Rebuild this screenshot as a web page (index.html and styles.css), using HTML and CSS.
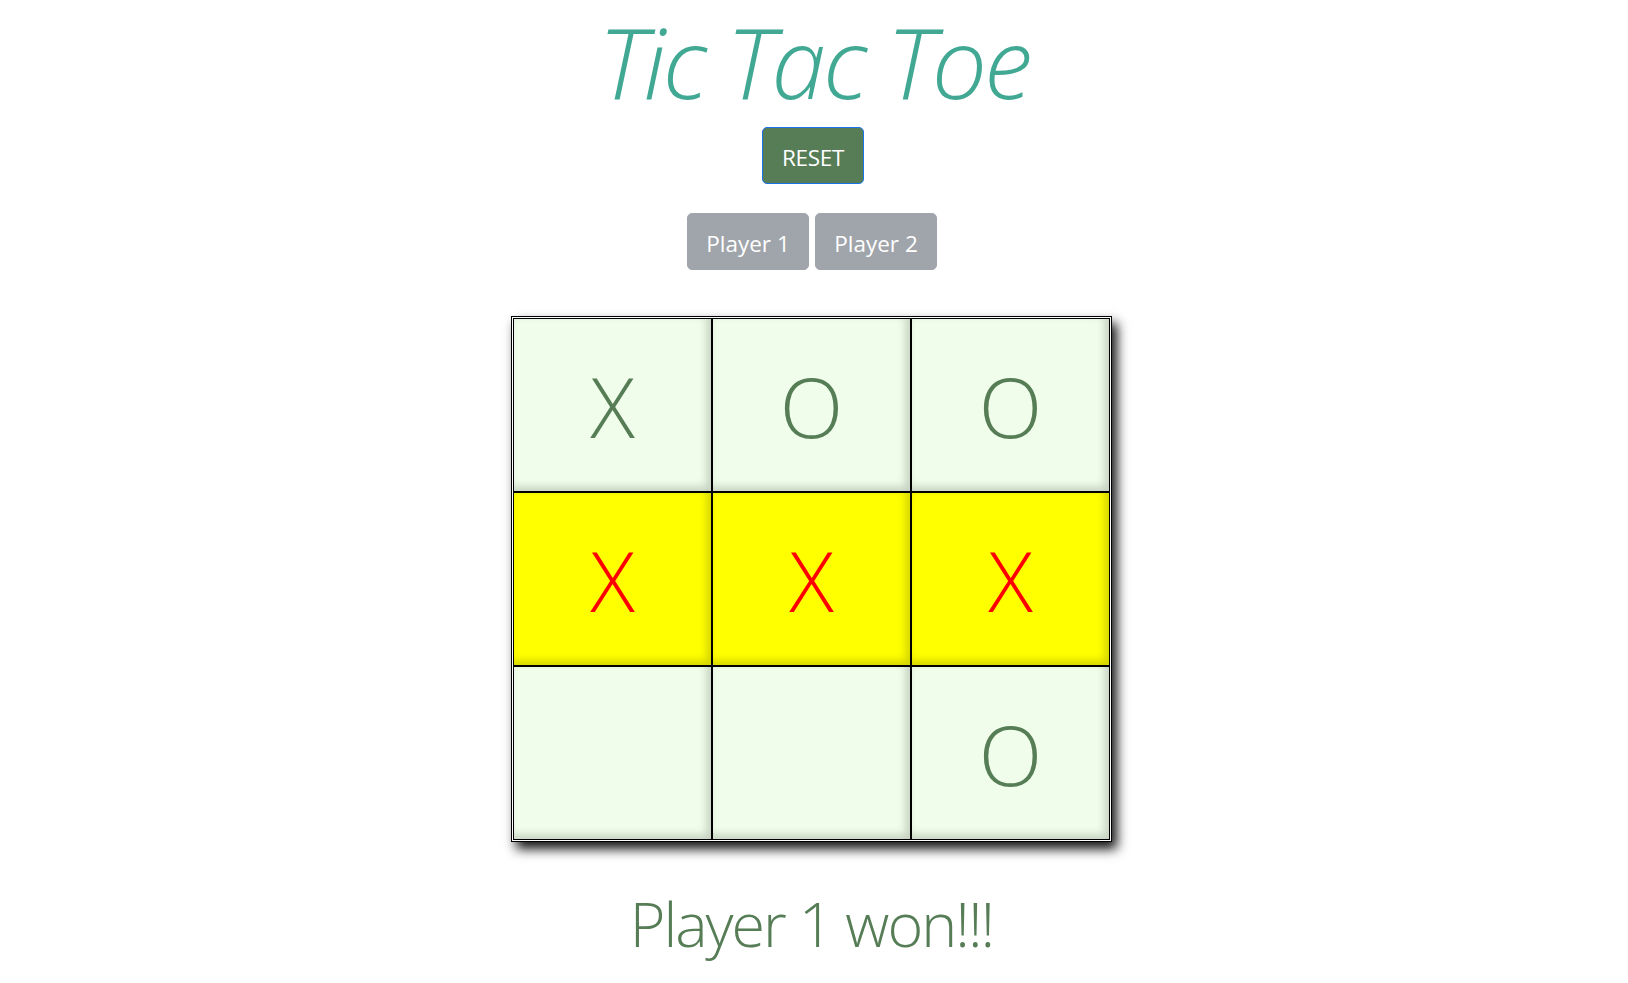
FILE: index.html
```html
<!DOCTYPE html>
<html lang="en">
<head>
<meta charset="utf-8">
<title>Tic Tac Toe</title>
<link rel="stylesheet" href="styles.css">
</head>
<body>
<main class="app">
  <h1 class="title">Tic Tac Toe</h1>
  <button class="btn btn-reset">RESET</button>
  <div class="players">
    <button class="btn btn-player" disabled>Player 1</button>
    <button class="btn btn-player" disabled>Player 2</button>
  </div>
  <div class="board">
    <div class="cell">X</div>
    <div class="cell">O</div>
    <div class="cell">O</div>
    <div class="cell win">X</div>
    <div class="cell win">X</div>
    <div class="cell win">X</div>
    <div class="cell"></div>
    <div class="cell"></div>
    <div class="cell">O</div>
  </div>
  <p class="result">Player 1 won!!!</p>
</main>
</body>
</html>
```

FILE: styles.css
```css
html, body {
  margin: 0;
  padding: 0;
  background: #ffffff;
}

body {
  font-family: "Open Sans", "Segoe UI", sans-serif;
}

.app {
  display: flex;
  flex-direction: column;
  align-items: center;
}

.title {
  margin: 0;
  padding: 0 16px;
  font-size: 98px;
  line-height: 122px;
  font-weight: 300;
  font-style: italic;
  letter-spacing: -3px;
  color: #40a893;
}

.btn {
  font-family: "Open Sans", "Segoe UI", sans-serif;
  color: #ffffff;
  border-radius: 5px;
  cursor: pointer;
}

.btn-reset {
  margin-top: 5px;
  margin-right: 2px;
  padding: 13px 0 9px;
  width: 102px;
  font-size: 22.5px;
  line-height: 33px;
  letter-spacing: -0.3px;
  background: #567d56;
  border: 1px solid #1a73e8;
}

.players {
  display: flex;
  gap: 6px;
  margin-top: 29px;
  margin-right: 4px;
}

.btn-player {
  width: 122px;
  padding: 13px 0 9px;
  font-size: 22.5px;
  line-height: 33px;
  background: #9fa5aa;
  border: 1px solid #9fa5aa;
  color: #ffffff;
}

.board {
  margin-top: 46px;
  margin-right: 5px;
  display: grid;
  grid-template-columns: repeat(3, 199px);
  grid-template-rows: repeat(3, 174px);
  border: 1px solid #000000;
  padding: 1px;
  background: #ffffff;
  box-shadow: 5px 7px 11px rgba(0, 0, 0, 0.92);
}

.cell {
  box-sizing: border-box;
  border: 1px solid #000000;
  background: #f0fdea;
  box-shadow: inset -4px -4px 8px rgba(0, 0, 0, 0.18);
  display: flex;
  align-items: center;
  justify-content: center;
  font-size: 83px;
  font-weight: 300;
  color: #567d56;
}

.cell.win {
  background: #ffff00;
  color: #ff0000;
}

.result {
  margin: 40px 5px 0 0;
  font-size: 61px;
  font-weight: 300;
  letter-spacing: -2px;
  color: #567d56;
}
```
